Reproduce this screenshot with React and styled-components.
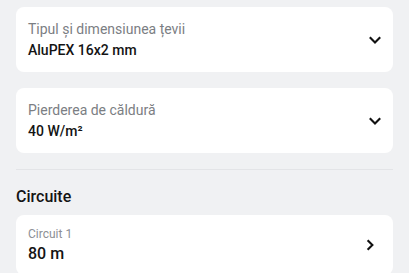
import styled, { createGlobalStyle } from "styled-components";

const Global = createGlobalStyle`
  html, body {
    margin: 0;
    padding: 0;
    background: #f0f1f3;
    font-family: Roboto, "Noto Sans", sans-serif;
  }
`;

const Page = styled.div`
  padding: 7px 16px 0 16px;
  display: flex;
  flex-direction: column;
`;

const Card = styled.div`
  background: #ffffff;
  border-radius: 8px;
  display: flex;
  align-items: center;
  justify-content: space-between;
  padding: ${({ compact }) => (compact ? "10px 11px 10px 12px" : "12px 11px 11px 12px")};
  margin-bottom: ${({ gap }) => gap || 0}px;
`;

const Texts = styled.div`
  display: flex;
  flex-direction: column;
`;

const Label = styled.div`
  color: ${({ small }) => (small ? "#8d9095" : "#7b7e83")};
  font-size: ${({ small }) => (small ? 12 : 14)}px;
  line-height: ${({ small }) => (small ? 18 : 20)}px;
`;

const Value = styled.div`
  color: #141414;
  font-weight: 500;
  font-size: ${({ big }) => (big ? 16 : 14)}px;
  line-height: 22px;
`;

const Icon = styled.svg`
  width: 14px;
  height: 14px;
  flex: none;
  margin-right: ${({ shift }) => shift || 0}px;
`;

const Divider = styled.div`
  height: 1px;
  background: #e3e4e7;
  margin: 16px 0 0;
`;

const SectionTitle = styled.div`
  font-size: 16px;
  font-weight: 500;
  color: #141414;
  line-height: 22px;
  padding: 16px 0 7px;
`;

const ChevronDown = () => (
  <Icon viewBox="0 0 14 14">
    <path d="M1.8 4.2l5.2 5.2 5.2-5.2" fill="none" stroke="#111" strokeWidth="2.1" />
  </Icon>
);

const ChevronRight = () => (
  <Icon viewBox="0 0 14 14" shift={5}>
    <path d="M4.6 2.2l4.8 4.8-4.8 4.8" fill="none" stroke="#111" strokeWidth="2.1" />
  </Icon>
);

export default function App() {
  return (
    <>
      <Global />
      <Page>
        <Card gap={16}>
          <Texts>
            <Label>Tipul și dimensiunea țevii</Label>
            <Value>AluPEX 16x2 mm</Value>
          </Texts>
          <ChevronDown />
        </Card>
        <Card>
          <Texts>
            <Label>Pierderea de căldură</Label>
            <Value>40 W/m²</Value>
          </Texts>
          <ChevronDown />
        </Card>
        <Divider />
        <SectionTitle>Circuite</SectionTitle>
        <Card compact>
          <Texts>
            <Label small>Circuit 1</Label>
            <Value big>80 m</Value>
          </Texts>
          <ChevronRight />
        </Card>
      </Page>
    </>
  );
}
